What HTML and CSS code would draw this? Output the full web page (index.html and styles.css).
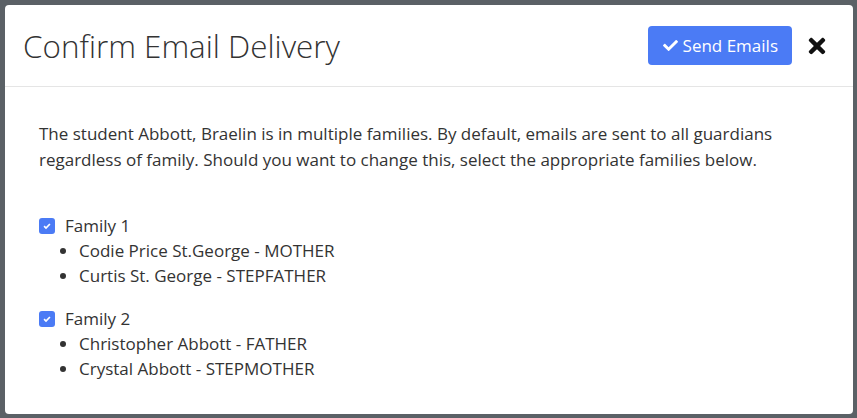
FILE: index.html
```html
<!DOCTYPE html>
<html>

<head>
	<link rel="stylesheet" href="styles.css">
</head>

<body>
	<div class="modal">
		<div class="modal-header">
			<h1 class="modal-title">Confirm Email Delivery</h1>
			<div class="actions">
				<button class="btn-send">
					<svg class="check" viewBox="0 0 512 512" width="15" height="15"><path fill="#fff" d="M173.9 439.4l-166.4-166.4c-10-10-10-26.2 0-36.2l36.2-36.2c10-10 26.2-10 36.2 0L192 312.7 432.1 72.6c10-10 26.2-10 36.2 0l36.2 36.2c10 10 10 26.2 0 36.2l-294.4 294.4c-10 10-26.2 10-36.2 0z"/></svg>
					Send Emails
				</button>
				<button class="btn-close">
					<svg viewBox="0 0 352 512" width="18" height="24"><path fill="#111" d="M242.7 256l100.1-100.1c12.3-12.3 12.3-32.2 0-44.5l-22.2-22.2c-12.3-12.3-32.2-12.3-44.5 0L176 189.3 75.9 89.2c-12.3-12.3-32.2-12.3-44.5 0L9.2 111.4c-12.3 12.3-12.3 32.2 0 44.5L109.3 256 9.2 356.1c-12.3 12.3-12.3 32.2 0 44.5l22.2 22.2c12.3 12.3 32.2 12.3 44.5 0L176 322.7l100.1 100.1c12.3 12.3 32.2 12.3 44.5 0l22.2-22.2c12.3-12.3 12.3-32.2 0-44.5L242.7 256z"/></svg>
				</button>
			</div>
		</div>

		<div class="modal-body">
			<p class="intro">The student Abbott, Braelin is in multiple families. By default, emails are sent to all guardians regardless of family. Should you want to change this, select the appropriate families below.</p>

			<div class="family">
				<label class="family-label"><span class="box"><svg viewBox="0 0 12 12" width="10" height="10"><path d="M2.5 6.2l2.3 2.3 4.7-4.9" fill="none" stroke="#fff" stroke-width="2"/></svg></span>Family 1</label>
				<ul>
					<li>Codie Price St.George - MOTHER</li>
					<li>Curtis St. George - STEPFATHER</li>
				</ul>
			</div>

			<div class="family">
				<label class="family-label"><span class="box"><svg viewBox="0 0 12 12" width="10" height="10"><path d="M2.5 6.2l2.3 2.3 4.7-4.9" fill="none" stroke="#fff" stroke-width="2"/></svg></span>Family 2</label>
				<ul>
					<li>Christopher Abbott - FATHER</li>
					<li>Crystal Abbott - STEPMOTHER</li>
				</ul>
			</div>
		</div>
	</div>
</body>

</html>
```

FILE: styles.css
```css
body {
	margin: 0;
	padding: 5px 4px 4px 5px;
	background: #5b6166;
	font-family: "Open Sans", sans-serif;
	color: #333;
	height: 418px;
	box-sizing: border-box;
	overflow: hidden;
}

.modal {
	background: #fff;
	border-radius: 4px;
	height: 409px;
	box-sizing: border-box;
}

.modal-header {
	display: flex;
	justify-content: space-between;
	align-items: center;
	height: 82px;
	padding: 0 27px 0 18px;
	border-bottom: 1px solid #e5e5e5;
	box-sizing: border-box;
}

.modal-title {
	margin: 0;
	font-size: 31.4px;
	font-weight: 300;
	color: #333;
}

.actions {
	display: flex;
	align-items: center;
	gap: 16px;
}

.btn-send {
	display: flex;
	align-items: center;
	gap: 5px;
	height: 39px;
	padding: 0 14px 0 15px;
	background: #4b7bf5;
	color: #fff;
	border: none;
	border-radius: 4px;
	font-family: "Open Sans", sans-serif;
	font-size: 17px;
}

.btn-close {
	background: none;
	border: none;
	padding: 0;
	display: flex;
}

.modal-body {
	padding: 34px 34px 0 34px;
}

.intro {
	margin: 0 0 40px 0;
	font-size: 17px;
	line-height: 26px;
	color: #333;
}

.family {
	margin-bottom: 18px;
}

.family-label {
	display: flex;
	align-items: center;
	font-size: 17px;
	line-height: 25px;
}

.box {
	width: 16px;
	height: 16px;
	border-radius: 3px;
	background: #4b7bf5;
	margin-right: 10px;
	display: flex;
	align-items: center;
	justify-content: center;
}

.family ul {
	margin: 0;
	padding-left: 40px;
	font-size: 17px;
	line-height: 25px;
}
```
